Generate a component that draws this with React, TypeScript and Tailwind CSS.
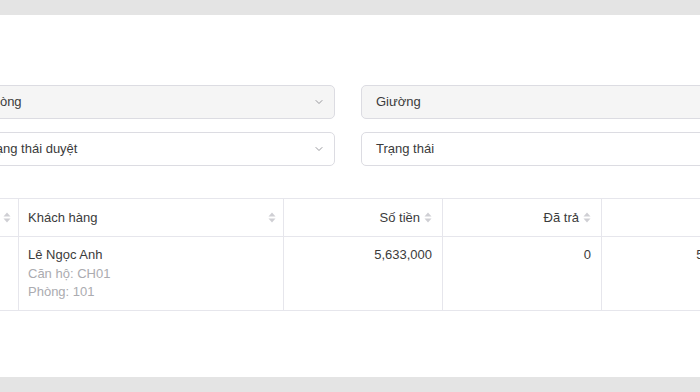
import { ChevronDown } from 'lucide-react';

function SortIcon() {
  return (
    <svg width="8" height="11" viewBox="0 0 8 11" className="shrink-0">
      <path d="M4 0.5 L7.5 4.5 L0.5 4.5 Z" fill="#cfcfd4" />
      <path d="M4 10.5 L7.5 6.5 L0.5 6.5 Z" fill="#cfcfd4" />
    </svg>
  );
}

function Select({ text, filled, chevron }: { text: string; filled?: boolean; chevron?: boolean }) {
  return (
    <div
      className={`h-[34px] rounded-[5px] border border-[#dcdce2] flex items-center justify-between pl-[14px] pr-[9px] ${
        filled ? 'bg-[#f5f5f5]' : 'bg-white'
      }`}
    >
      <span className="text-[13px] text-[#3b3b3b] whitespace-nowrap">{text}</span>
      {chevron && <ChevronDown size={12} strokeWidth={1.6} className="text-[#7f7f85]" />}
    </div>
  );
}

function App() {
  // mấy ô lọc, cột trái bị tràn ra ngoài bên trái
  const filters = [
    { left: 'Phòng', right: 'Giường', filled: true },
    { left: 'Trạng thái duyệt', right: 'Trạng thái', filled: false },
  ];

  return (
    <div
      className="w-[700px] h-[392px] overflow-hidden bg-[#e4e4e4] pt-[15px]"
      style={{ fontFamily: '"Liberation Sans", Arial, sans-serif' }}
    >
      <div className="bg-white h-[362px] overflow-hidden pt-[70px]">
        <div className="flex flex-col gap-[13px]">
          {filters.map((f) => (
            <div key={f.right} className="flex gap-[26px] ml-[-31px]">
              <div className="w-[366px] shrink-0">
                <Select text={f.left} filled={f.filled} chevron />
              </div>
              <div className="w-[380px] shrink-0">
                <Select text={f.right} filled={f.filled} chevron />
              </div>
            </div>
          ))}
        </div>

        {/* Bảng công nợ */}
        <div className="mt-[32px] ml-[-59px] w-[820px] border-t border-b border-[#e6e6ec] text-[13px] text-[#3b3b3b]">
          <div className="flex h-[38px] border-b border-[#e6e6ec]">
            <div className="w-[78px] shrink-0 flex items-center justify-end pr-[7px] border-r border-[#e6e6ec]">
              <SortIcon />
            </div>
            <div className="w-[265px] shrink-0 flex items-center justify-between pl-[9px] pr-[7px] border-r border-[#e6e6ec]">
              <span>Khách hàng</span>
              <SortIcon />
            </div>
            <div className="w-[159px] shrink-0 flex items-center justify-end gap-[4px] pr-[10px] border-r border-[#e6e6ec]">
              <span>Số tiền</span>
              <SortIcon />
            </div>
            <div className="w-[159px] shrink-0 flex items-center justify-end gap-[4px] pr-[10px] border-r border-[#e6e6ec]">
              <span>Đã trả</span>
              <SortIcon />
            </div>
            <div className="flex-1" />
          </div>
          <div className="flex h-[73px] leading-[18.5px]">
            <div className="w-[78px] shrink-0 border-r border-[#e6e6ec]" />
            <div className="w-[265px] shrink-0 pl-[9px] pt-[9px] border-r border-[#e6e6ec]">
              <div>Lê Ngọc Anh</div>
              <div className="text-[#ababb0]">Căn hộ: CH01</div>
              <div className="text-[#ababb0]">Phòng: 101</div>
            </div>
            <div className="w-[159px] shrink-0 text-right pr-[10px] pt-[9px] border-r border-[#e6e6ec]">5,633,000</div>
            <div className="w-[159px] shrink-0 text-right pr-[10px] pt-[9px] border-r border-[#e6e6ec]">0</div>
            <div className="flex-1 pt-[9px] text-right pr-[7px]">5,633,000</div>
          </div>
        </div>
      </div>
    </div>
  );
}

export default App;
